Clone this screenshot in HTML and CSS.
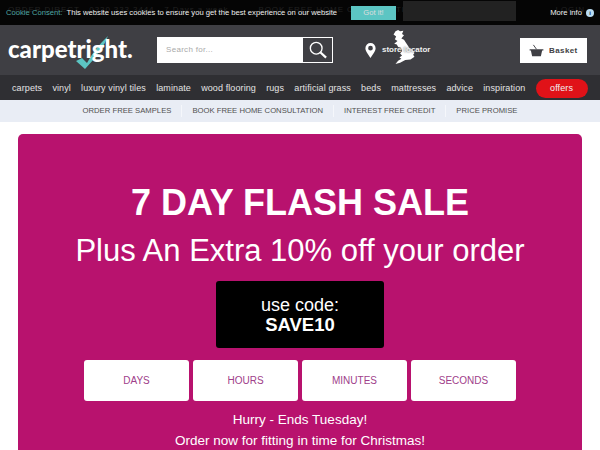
FILE: index.html
```html
<!DOCTYPE html>
<html lang="en">
<head>
  <meta charset="UTF-8">
  <title>Carpetright</title>
  <link rel="stylesheet" href="styles.css">
</head>
<body>

<!-- Top bar -->
<div class="topbar">
  <span class="top-phone">ORDER DIRECT - 0330 333 3444 - 7 Days a week</span>
  <span class="top-book">BOOK FREE HOME CONSULTATION</span>
  <span class="top-login">LOGIN</span>
</div>

<!-- Cookie bar -->
<div class="cookie">
  <span class="cookie-title">Cookie Consent:</span>
  <span class="cookie-text">This website uses cookies to ensure you get the best experience on our website</span>
  <span class="cookie-btn">Got it!</span>
  <span class="cookie-box"></span>
  <span class="cookie-more">More info</span>
  <span class="cookie-info">i</span>
</div>

<!-- Header -->
<header class="header">
  <div class="logo">
    <svg class="logo-tick" width="33" height="33" viewBox="0 0 33 33"><path d="M0 25 L6 22 L11 27 Q19 12 32 0 Q27 14 9 33 Z" fill="#5cc5c3"/></svg>
    <span class="logo-text">carpetright.</span>
  </div>
  <div class="search">
    <span class="search-input">Search for...</span>
    <span class="search-btn">
      <svg width="18" height="18" viewBox="0 0 20 20" fill="none" stroke="#fff"><circle cx="8" cy="8" r="6.500" stroke-width="1.500"/><path d="M12.500 12.500 L19 18.500" stroke-width="2.500"/></svg>
    </span>
  </div>
  <div class="locator">
    <svg class="pin" width="11" height="15" viewBox="0 0 14 19"><path fill-rule="evenodd" d="M7 0a6.500 6.500 0 0 1 6.500 6.500C13.500 11 9 15 7 19 5 15 .5 11 .5 6.500A6.500 6.500 0 0 1 7 0zm0 3.500a3 3 0 1 0 0 6 3 3 0 0 0 0-6z" fill="#fff"/></svg>
    <div class="uk">
      <svg width="24" height="34" viewBox="0 0 36 52"><path d="M5 2 L9 0 L12 2 L17 1 L15 6 L18 8 L14 13 L18 15 L22 21 L26 27 L31 30 L34 35 L32 38 L34 41 L28 45 L20 46 L12 50 L5 52 L9 47 L14 44 L11 42 L15 39 L12 36 L15 32 L13 27 L9 26 L7 22 L3 21 L8 17 L4 14 L6 10 L2 7 Z" fill="#fff"/></svg>
      <span class="uk-label">store locator</span>
    </div>
  </div>
  <div class="basket">
    <svg width="15" height="13" viewBox="0 0 24 20"><path d="M7 1 L12 8" stroke="#3f3f44" stroke-width="1.500"/><path d="M1 8 H23 V10 H21 L19 19 H5 L3 10 H1 Z" fill="#3f3f44"/></svg>
    <span>Basket</span>
  </div>
</header>

<!-- Main nav -->
<nav class="nav">
  <span>carpets</span>
  <span>vinyl</span>
  <span>luxury vinyl tiles</span>
  <span>laminate</span>
  <span>wood flooring</span>
  <span>rugs</span>
  <span>artificial grass</span>
  <span>beds</span>
  <span>mattresses</span>
  <span>advice</span>
  <span>inspiration</span>
  <span class="offers">offers</span>
</nav>

<!-- USP strip -->
<div class="strip">
  <span>ORDER FREE SAMPLES</span>
  <span>BOOK FREE HOME CONSULTATION</span>
  <span>INTEREST FREE CREDIT</span>
  <span>PRICE PROMISE</span>
</div>

<!-- Sale card -->
<main class="sale">
  <h1>7 DAY FLASH SALE</h1>
  <h2>Plus An Extra 10% off your order</h2>
  <div class="code">
    <span>use code:</span>
    <strong>SAVE10</strong>
  </div>
  <div class="timer">
    <div>DAYS</div>
    <div>HOURS</div>
    <div>MINUTES</div>
    <div>SECONDS</div>
  </div>
  <p>Hurry - Ends Tuesday!</p>
  <p>Order now for fitting in time for Christmas!</p>
</main>

</body>
</html>
```

FILE: styles.css
```css
* {
  box-sizing: border-box;
}
html, body {
  height: 450px;
  overflow: hidden;
}
body {
  margin: 0;
  position: relative;
  font-family: "Liberation Sans", Arial, sans-serif;
  background: #fff;
}
/* Top bar */
.topbar {
  height: 25px;
  background: #050505;
  color: #222;
  font-size: 8px;
  letter-spacing: 0.9px;
  display: flex;
  align-items: flex-start;
  padding: 5px 0 0 8px;
  white-space: nowrap;
}
.top-book {
  margin-left: 30px;
}
.top-login {
  margin-left: auto;
  margin-right: 15px;
}
/* Cookie bar */
.cookie {
  position: absolute;
  top: 0;
  left: 0;
  width: 600px;
  height: 25px;
  display: flex;
  align-items: center;
  padding-left: 6px;
  font-size: 7.650px;
  color: #eee;
  white-space: nowrap;
}
.cookie-title {
  color: #4fa5a3;
  margin-right: 4px;
}
.cookie-btn {
  margin-left: 14px;
  width: 45px;
  height: 14px;
  background: #5cc5c3;
  color: #ddd;
  line-height: 14px;
  text-align: center;
}
.cookie-box {
  margin-left: 7px;
  width: 113px;
  height: 20px;
  background: #222;
  margin-bottom: 4px;
}
.cookie-more {
  margin-left: auto;
}
.cookie-info {
  margin: 0 6px 0 4px;
  width: 8px;
  height: 8px;
  border-radius: 50%;
  background: #b9dcf2;
  color: #135;
  font-size: 6px;
  font-weight: bold;
  line-height: 8px;
  text-align: center;
}
/* Header */
.header {
  height: 50px;
  background: #3f3f44;
  display: flex;
  align-items: center;
  padding: 0 13px 0 8px;
}
.logo {
  position: relative;
  width: 149px;
  margin-bottom: 4px;
}
.logo-text {
  position: relative;
  font-family: Lato, sans-serif;
  font-weight: 900;
  font-size: 24px;
  color: #fff;
}
.logo-tick {
  position: absolute;
  top: 2px;
  left: 68px;
}
.search {
  display: flex;
  width: 176px;
  height: 26px;
  background: #fff;
}
.search-input {
  flex: 1;
  padding-left: 9px;
  font-size: 8px;
  line-height: 26px;
  color: #aaa;
  letter-spacing: 0.3px;
}
.search-btn {
  width: 31px;
  background: #3f3f44;
  border: 1px solid #fff;
  display: flex;
  align-items: center;
  justify-content: center;
}
.locator {
  display: flex;
  align-items: center;
  margin-left: 32px;
}
.uk {
  position: relative;
  width: 50px;
  height: 50px;
  margin-left: 6px;
}
.uk svg {
  position: absolute;
  top: 5px;
  left: 10px;
}
.uk-label {
  position: absolute;
  top: 20px;
  left: 0;
  font-size: 8px;
  font-weight: bold;
  color: #eee;
  white-space: nowrap;
  text-shadow: 0 0 2px #3f3f44;
}
.basket {
  margin-left: auto;
  width: 67px;
  height: 25px;
  background: #fff;
  display: flex;
  align-items: center;
  gap: 5px;
  padding-left: 9px;
  font-size: 8px;
  font-weight: bold;
  color: #3f3f44;
  letter-spacing: 0.400px;
}
/* Main nav */
.nav {
  height: 25px;
  background: #2f2f33;
  display: flex;
  align-items: center;
  padding: 1px 0 0 12px;
  gap: 10.200px;
  font-size: 9px;
  letter-spacing: 0.100px;
  color: #e4e4e4;
  white-space: nowrap;
}
.offers {
  width: 52px;
  height: 19px;
  border-radius: 10px;
  background: #e01218;
  color: #f0f0f0;
  line-height: 19px;
  text-align: center;
}
/* USP strip */
.strip {
  height: 22px;
  background: #e9edf5;
  display: flex;
  align-items: center;
  justify-content: center;
  font-size: 7.700px;
  line-height: 12px;
  color: #505050;
}
.strip span {
  padding: 0 10px;
}
.strip span + span {
  border-left: 1px solid #f5f7fb;
}
/* Sale card */
.sale {
  margin: 12px 18px 0;
  height: 316px;
  padding-top: 47px;
  background: #b8126e;
  border-radius: 5px 5px 0 0;
  color: #fff;
  text-align: center;
}
.sale h1 {
  margin: 0;
  font-size: 36px;
  line-height: 43px;
  font-weight: bold;
}
.sale h2 {
  margin: 10px 0 0;
  font-size: 31px;
  line-height: 34px;
  font-weight: normal;
}
.code {
  width: 168px;
  height: 67px;
  margin: 13px auto 0;
  background: #000;
  border-radius: 3px;
  display: flex;
  flex-direction: column;
  justify-content: center;
  font-size: 18px;
  line-height: 20px;
}
.code strong {
  font-size: 18.500px;
}
.timer {
  display: flex;
  justify-content: center;
  gap: 4px;
  margin-top: 12px;
}
.timer div {
  width: 105px;
  height: 41px;
  background: #fff;
  border-radius: 3px;
  color: #a0408a;
  font-size: 10px;
  line-height: 41px;
}
.sale p {
  margin: 0;
  font-size: 13.500px;
  line-height: 21px;
}
.timer + p {
  margin-top: 8px;
}
```
